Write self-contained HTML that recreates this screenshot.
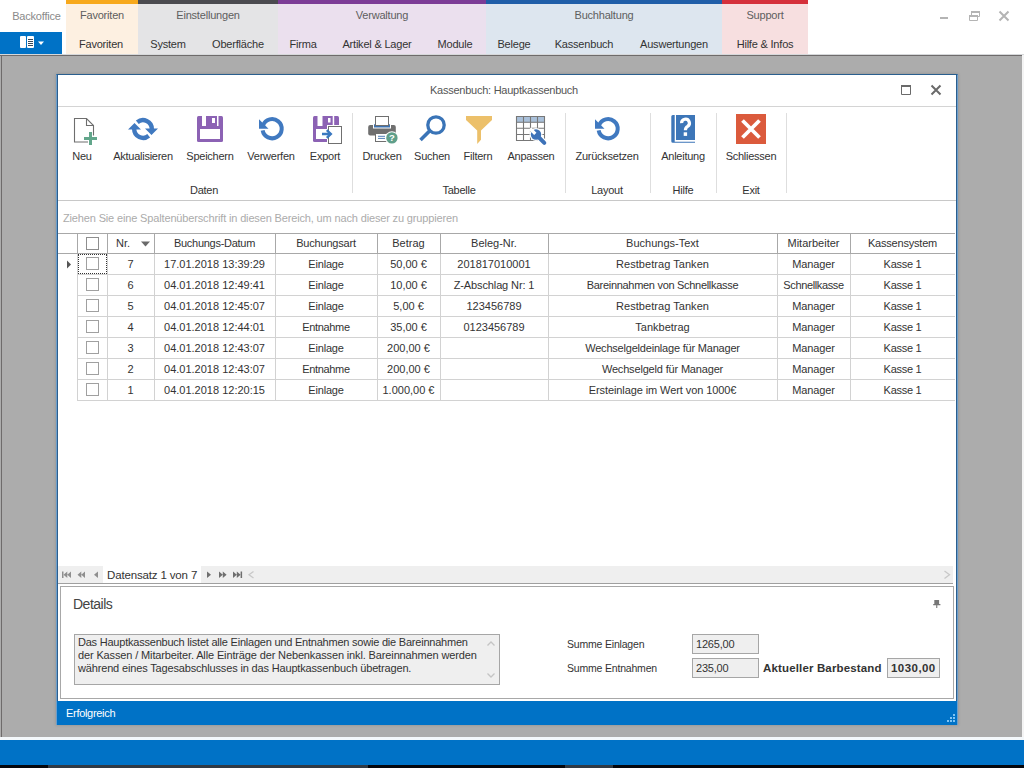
<!DOCTYPE html>
<html><head><meta charset="utf-8">
<style>
*{box-sizing:border-box;margin:0;padding:0}
html,body{width:1024px;height:768px;overflow:hidden;background:#acacac;font-family:"Liberation Sans",sans-serif;color:#333}
.a{position:absolute}
.t{position:absolute;white-space:nowrap;line-height:12px;font-size:11px}
.c{text-align:center}
</style></head><body>
<!-- top app ribbon -->
<div class="a" style="left:0;top:0;width:1024px;height:54px;background:#fff"></div>
<div class="a" style="left:0;top:54px;width:1024px;height:1px;background:#d6d8da"></div>
<div class="a" style="left:0;top:55px;width:1024px;height:1px;background:#6e6b6b"></div>
<div class="a" style="left:1px;top:55px;width:1px;height:682px;background:#6e6b6b"></div>
<div class="a" style="left:1022px;top:55px;width:2px;height:682px;background:#f4f4f4"></div>
<div class="t" style="left:0;top:10px;width:73px;text-align:center;color:#8a8a8a;letter-spacing:-0.2px">Backoffice</div>
<div class="a" style="left:0;top:32px;width:62px;height:22px;background:#0072c6"></div>

<!-- tab groups -->
<div class="a" style="left:66px;top:0;width:72px;height:54px;background:#fdf0e1"></div>
<div class="a" style="left:66px;top:0;width:72px;height:4px;background:#f7a81b"></div>
<div class="a" style="left:138px;top:0;width:140px;height:54px;background:#e4e4e6"></div>
<div class="a" style="left:138px;top:0;width:140px;height:4px;background:#4b4b50"></div>
<div class="a" style="left:278px;top:0;width:208px;height:54px;background:#ebe0ee"></div>
<div class="a" style="left:278px;top:0;width:208px;height:4px;background:#7c3c96"></div>
<div class="a" style="left:486px;top:0;width:236px;height:54px;background:#dde6ef"></div>
<div class="a" style="left:486px;top:0;width:236px;height:4px;background:#1f5ea8"></div>
<div class="a" style="left:722px;top:0;width:86px;height:54px;background:#f7dfe0"></div>
<div class="a" style="left:722px;top:0;width:86px;height:4px;background:#d5303b"></div>


<!-- tab labels -->
<div class="t c" style="left:66px;top:9px;width:72px;color:#5e5e5e;letter-spacing:-0.2px">Favoriten</div>
<div class="t c" style="left:138px;top:9px;width:140px;color:#5e5e5e;letter-spacing:-0.2px">Einstellungen</div>
<div class="t c" style="left:278px;top:9px;width:208px;color:#5e5e5e;letter-spacing:-0.2px">Verwaltung</div>
<div class="t c" style="left:486px;top:9px;width:236px;color:#5e5e5e;letter-spacing:-0.2px">Buchhaltung</div>
<div class="t c" style="left:722px;top:9px;width:86px;color:#5e5e5e;letter-spacing:-0.2px">Support</div>
<div class="t c" style="left:61px;top:38px;width:80px;color:#333;letter-spacing:-0.2px">Favoriten</div>
<div class="t c" style="left:128px;top:38px;width:80px;color:#333;letter-spacing:-0.2px">System</div>
<div class="t c" style="left:198px;top:38px;width:80px;color:#333;letter-spacing:-0.2px">Oberfläche</div>
<div class="t c" style="left:263px;top:38px;width:80px;color:#333;letter-spacing:-0.2px">Firma</div>
<div class="t c" style="left:327px;top:38px;width:100px;color:#333;letter-spacing:-0.2px">Artikel &amp; Lager</div>
<div class="t c" style="left:415px;top:38px;width:80px;color:#333;letter-spacing:-0.2px">Module</div>
<div class="t c" style="left:474px;top:38px;width:80px;color:#333;letter-spacing:-0.2px">Belege</div>
<div class="t c" style="left:534px;top:38px;width:100px;color:#333;letter-spacing:-0.2px">Kassenbuch</div>
<div class="t c" style="left:624px;top:38px;width:100px;color:#333;letter-spacing:-0.2px">Auswertungen</div>
<div class="t c" style="left:715px;top:38px;width:100px;color:#333;letter-spacing:-0.2px">Hilfe &amp; Infos</div>
<!-- app icon -->
<div class="a" style="left:20px;top:36px;width:6px;height:12px;background:#fff;border-radius:1px"></div>
<div class="a" style="left:27px;top:36px;width:7px;height:12px;background:#fff;border-radius:1px"></div>
<div class="a" style="left:28px;top:39px;width:5px;height:1px;background:#3a4a5a"></div>
<div class="a" style="left:28px;top:41px;width:5px;height:1px;background:#3a4a5a"></div>
<div class="a" style="left:28px;top:43px;width:5px;height:1px;background:#3a4a5a"></div>
<div class="a" style="left:28px;top:45px;width:5px;height:1px;background:#3a4a5a"></div>
<svg class="a" style="left:37px;top:40px" width="8" height="6"><path d="M1 1.5h6l-3 3.5z" fill="#fff"/></svg>
<!-- window controls -->
<svg class="a" style="left:930px;top:0" width="94" height="32">
<rect x="10" y="17" width="8" height="2" fill="#b4b4b4"/>
<path d="M39.5 15.5h8v5h-8z M41.5 15.5v-4h8v5h-2" fill="none" stroke="#b4b4b4" stroke-width="1"/><rect x="39" y="15" width="9" height="2" fill="#b4b4b4"/><rect x="41" y="11" width="9" height="2" fill="#b4b4b4"/>
<path d="M69.5 11.5l9 9 M78.5 11.5l-9 9" stroke="#b4b4b4" stroke-width="2"/>
</svg>

<!-- bottom taskbar -->
<div class="a" style="left:0;top:737px;width:1024px;height:3px;background:#f4f8fb"></div>
<div class="a" style="left:0;top:740px;width:1024px;height:25px;background:#0072c6"></div>
<div class="a" style="left:0;top:765px;width:1024px;height:3px;background:#05070c"></div>
<div class="a" style="left:48px;top:765px;width:320px;height:3px;background:#303a44"></div>
<div class="a" style="left:565px;top:765px;width:48px;height:3px;background:#303a44"></div>

<!-- window -->
<div class="a" id="win" style="left:56px;top:74px;width:902px;height:651px;background:#fff;border-top:1px solid #2a5f8e;border-left:1px solid #6c9ecb;border-right:1px solid #6c9ecb;box-shadow:0 0 3px rgba(0,0,0,0.18)"></div>
<div class="a" style="left:57px;top:75px;width:1px;height:650px;background:#2b5e8e"></div>
<div class="a" style="left:956px;top:75px;width:1px;height:650px;background:#2b5e8e"></div>
<div class="t" style="left:55px;top:84px;width:898px;text-align:center;color:#555;letter-spacing:-0.25px">Kassenbuch: Hauptkassenbuch</div>
<div class="a" style="left:58px;top:106px;width:898px;height:1px;background:#d4d4d4"></div>
<div class="a" style="left:58px;top:200px;width:898px;height:1px;background:#c8c8c8"></div>


<!-- toolbar labels -->
<div class="t c" style="left:52px;top:150px;width:60px;color:#333;letter-spacing:-0.25px">Neu</div>
<div class="t c" style="left:103px;top:150px;width:80px;color:#333;letter-spacing:-0.25px">Aktualisieren</div>
<div class="t c" style="left:170px;top:150px;width:80px;color:#333;letter-spacing:-0.25px">Speichern</div>
<div class="t c" style="left:231px;top:150px;width:80px;color:#333;letter-spacing:-0.25px">Verwerfen</div>
<div class="t c" style="left:295px;top:150px;width:60px;color:#333;letter-spacing:-0.25px">Export</div>
<div class="t c" style="left:352px;top:150px;width:60px;color:#333;letter-spacing:-0.25px">Drucken</div>
<div class="t c" style="left:402px;top:150px;width:60px;color:#333;letter-spacing:-0.25px">Suchen</div>
<div class="t c" style="left:448px;top:150px;width:60px;color:#333;letter-spacing:-0.25px">Filtern</div>
<div class="t c" style="left:501px;top:150px;width:60px;color:#333;letter-spacing:-0.25px">Anpassen</div>
<div class="t c" style="left:567px;top:150px;width:80px;color:#333;letter-spacing:-0.25px">Zurücksetzen</div>
<div class="t c" style="left:643px;top:150px;width:80px;color:#333;letter-spacing:-0.25px">Anleitung</div>
<div class="t c" style="left:711px;top:150px;width:80px;color:#333;letter-spacing:-0.25px">Schliessen</div>
<div class="t c" style="left:174px;top:184px;width:60px;color:#333;letter-spacing:-0.25px">Daten</div>
<div class="t c" style="left:429px;top:184px;width:60px;color:#333;letter-spacing:-0.25px">Tabelle</div>
<div class="t c" style="left:577px;top:184px;width:60px;color:#333;letter-spacing:-0.25px">Layout</div>
<div class="t c" style="left:653px;top:184px;width:60px;color:#333;letter-spacing:-0.25px">Hilfe</div>
<div class="t c" style="left:721px;top:184px;width:60px;color:#333;letter-spacing:-0.25px">Exit</div>
<!-- separators -->
<div class="a" style="left:352px;top:113px;width:1px;height:80px;background:#dedede"></div>
<div class="a" style="left:565px;top:113px;width:1px;height:80px;background:#dedede"></div>
<div class="a" style="left:650px;top:113px;width:1px;height:80px;background:#dedede"></div>
<div class="a" style="left:716px;top:113px;width:1px;height:80px;background:#dedede"></div>
<div class="a" style="left:786px;top:113px;width:1px;height:80px;background:#dedede"></div>
<!-- icons -->
<svg class="a" style="left:70px;top:112px" width="32" height="36">
<path d="M4.5 6.5h12l7 7v10 M4.5 6v24h13.5 M16.5 6.5v7h7" stroke="#6e6e6e" stroke-width="1.1" fill="none"/>
<rect x="19" y="20" width="3" height="13" fill="#62a68b"/><rect x="14" y="25" width="13" height="3" fill="#62a68b"/>
</svg>
<svg class="a" style="left:124px;top:112px" width="40" height="34">
<g fill="none" stroke="#4079c0" stroke-width="4.4">
<path d="M13.3 10.3A8.8 8.8 0 0 1 27.8 17"/><path d="M24.7 23.7A8.8 8.8 0 0 1 10.2 17"/></g>
<path d="M21 16.4H34L27.5 23Z M4 17.6H17L10.5 11Z" fill="#4079c0"/>
</svg>
<svg class="a" style="left:192px;top:110px" width="36" height="36">
<rect x="5" y="6" width="26" height="26" rx="1.5" fill="#8c62b4"/>
<rect x="10" y="5" width="4" height="11" fill="#fff"/><rect x="25" y="5" width="1.5" height="11" fill="#fff"/>
<rect x="20" y="8" width="3" height="5" fill="#fff"/><rect x="8" y="19" width="20" height="10" fill="#fff"/>
</svg>
<svg class="a" style="left:254px;top:112px" width="36" height="34">
<path d="M8.65 18.4A9.6 9.6 0 1 0 9.08 13.42" fill="none" stroke="#4079c0" stroke-width="4"/>
<path d="M5 7.3V16.8H14.5Z" fill="#4079c0"/>
</svg>
<svg class="a" style="left:308px;top:110px" width="38" height="38">
<rect x="5" y="6" width="26" height="26" rx="1.5" fill="#8c62b4"/>
<rect x="9.5" y="5" width="5" height="11" fill="#fff"/><rect x="24.7" y="5" width="1.5" height="10" fill="#fff"/>
<rect x="20" y="8" width="2.5" height="4.5" fill="#fff"/><rect x="8" y="19" width="12" height="10" fill="#fff"/>
<rect x="19" y="15" width="17" height="20" fill="#fff"/>
<rect x="20.5" y="16.5" width="13" height="17" fill="#fff" stroke="#707070" stroke-width="1"/>
<path d="M14 24h9 M18.8 20.2L22.8 24L18.8 27.8" fill="none" stroke="#3a78c0" stroke-width="2.4"/>
</svg>
<svg class="a" style="left:363px;top:110px" width="40" height="40">
<rect x="5.2" y="15" width="27.6" height="10.5" rx="2" fill="#6f6f6f"/>
<rect x="10" y="14" width="18" height="4.5" fill="#fff"/>
<rect x="11" y="14.3" width="16" height="3.2" fill="#3d72b0"/>
<rect x="12.5" y="6.5" width="13" height="9" fill="#fff" stroke="#6f6f6f" stroke-width="1"/>
<rect x="12.5" y="23.5" width="16" height="8" fill="#fff" stroke="#6f6f6f" stroke-width="1"/>
<path d="M15 26.3h7 M15 28.4h7" stroke="#3d72b0" stroke-width="0.9"/>
<circle cx="28.9" cy="27.9" r="6.7" fill="#fff"/><circle cx="28.9" cy="27.9" r="5.7" fill="#5f9f8a"/>
<text x="28.9" y="31.4" font-family="Liberation Sans" font-weight="bold" font-size="9.5" fill="#fff" text-anchor="middle">?</text>
</svg>
<svg class="a" style="left:412px;top:110px" width="40" height="40">
<circle cx="24" cy="15" r="8.2" fill="none" stroke="#3a74b7" stroke-width="3.3"/>
<path d="M8.5 30L17.8 20.7" stroke="#3a74b7" stroke-width="3.6"/>
</svg>
<svg class="a" style="left:459px;top:110px" width="40" height="40">
<path d="M7 6H33V10L22 20.5V29.7L18.2 33.9V20.5L7 10Z" fill="#ecc06a"/>
</svg>
<svg class="a" style="left:511px;top:110px" width="40" height="40">
<rect x="5.5" y="6.5" width="28" height="6" fill="#a9c0da"/>
<path d="M5.5 6.5h28v24h-28z M5.5 12.3h28 M5.5 18.3h28 M5.5 24.5h28 M12.5 6.5v24 M19.5 6.5v24 M26.5 6.5v24" fill="none" stroke="#777" stroke-width="1.1"/>
<circle cx="25" cy="24.5" r="6.4" fill="#fff"/>
<path d="M26 25.5L33.3 32.8" stroke="#fff" stroke-width="6.2" stroke-linecap="round"/>
<circle cx="25" cy="24.5" r="5.2" fill="#3d72b8"/>
<path d="M26 25.5L33.3 32.8" stroke="#3d72b8" stroke-width="4" stroke-linecap="round"/>
<path d="M25.43 22.67L20.13 17.37L17.87 19.63L23.17 24.93Z" fill="#fff"/>
</svg>
<svg class="a" style="left:664px;top:110px" width="40" height="40">
<path d="M7.3 6.5Q7.3 5 8.8 5H10.7V31.8H31V32.8H8.8Q7.3 32.8 7.3 31.3Z" fill="#3d76b8"/>
<rect x="12" y="5" width="19" height="25" fill="#3d76b8"/>
<path d="M17.6 13.2A3.9 3.9 0 1 1 23.6 16.3Q21.4 17.6 21.4 20.3" fill="none" stroke="#fff" stroke-width="3.2"/>
<rect x="19.7" y="22.3" width="3.4" height="3.6" fill="#fff"/>
</svg>
<svg class="a" style="left:731px;top:108px" width="40" height="40">
<rect x="5" y="6" width="30" height="30" fill="#db5a3c"/>
<path d="M11.5 12.5L28.5 29.5 M28.5 12.5L11.5 29.5" stroke="#fff" stroke-width="3.8"/>
</svg>


<svg class="a" style="left:590px;top:112px" width="36" height="34">
<path d="M8.65 18.4A9.6 9.6 0 1 0 9.08 13.42" fill="none" stroke="#4079c0" stroke-width="4"/>
<path d="M5 7.3V16.8H14.5Z" fill="#4079c0"/>
</svg>
<!-- title controls -->
<svg class="a" style="left:895px;top:80px" width="55" height="20">
<path d="M6.5 5.5h9v9h-9z" fill="none" stroke="#6a6a6a" stroke-width="1"/><rect x="6" y="5" width="10" height="2" fill="#6a6a6a"/>
<path d="M36.5 5.5l9 9 M45.5 5.5l-9 9" stroke="#6a6a6a" stroke-width="2"/>
</svg>
<!-- grid -->
<div class="t" style="left:63px;top:212px;color:#ababab;letter-spacing:-0.15px">Ziehen Sie eine Spaltenüberschrift in diesen Bereich, um nach dieser zu gruppieren</div>
<div class="a" style="left:58px;top:233px;width:897px;height:1px;background:#a8a8a8"></div>
<div class="a" style="left:58px;top:253px;width:897px;height:1px;background:#a8a8a8"></div>
<div class="a" style="left:77px;top:234px;width:1px;height:19px;background:#a8a8a8"></div>
<div class="a" style="left:107px;top:234px;width:1px;height:19px;background:#a8a8a8"></div>
<div class="a" style="left:154px;top:234px;width:1px;height:19px;background:#a8a8a8"></div>
<div class="a" style="left:275px;top:234px;width:1px;height:19px;background:#a8a8a8"></div>
<div class="a" style="left:377px;top:234px;width:1px;height:19px;background:#a8a8a8"></div>
<div class="a" style="left:440px;top:234px;width:1px;height:19px;background:#a8a8a8"></div>
<div class="a" style="left:548px;top:234px;width:1px;height:19px;background:#a8a8a8"></div>
<div class="a" style="left:777px;top:234px;width:1px;height:19px;background:#a8a8a8"></div>
<div class="a" style="left:850px;top:234px;width:1px;height:19px;background:#a8a8a8"></div>
<div class="a" style="left:77px;top:254px;width:1px;height:146px;background:#d2d2d2"></div>
<div class="a" style="left:107px;top:254px;width:1px;height:146px;background:#d2d2d2"></div>
<div class="a" style="left:154px;top:254px;width:1px;height:146px;background:#d2d2d2"></div>
<div class="a" style="left:275px;top:254px;width:1px;height:146px;background:#d2d2d2"></div>
<div class="a" style="left:377px;top:254px;width:1px;height:146px;background:#d2d2d2"></div>
<div class="a" style="left:440px;top:254px;width:1px;height:146px;background:#d2d2d2"></div>
<div class="a" style="left:548px;top:254px;width:1px;height:146px;background:#d2d2d2"></div>
<div class="a" style="left:777px;top:254px;width:1px;height:146px;background:#d2d2d2"></div>
<div class="a" style="left:850px;top:254px;width:1px;height:146px;background:#d2d2d2"></div>
<div class="a" style="left:77px;top:274px;width:878px;height:1px;background:#d2d2d2"></div>
<div class="a" style="left:77px;top:295px;width:878px;height:1px;background:#d2d2d2"></div>
<div class="a" style="left:77px;top:316px;width:878px;height:1px;background:#d2d2d2"></div>
<div class="a" style="left:77px;top:337px;width:878px;height:1px;background:#d2d2d2"></div>
<div class="a" style="left:77px;top:358px;width:878px;height:1px;background:#d2d2d2"></div>
<div class="a" style="left:77px;top:379px;width:878px;height:1px;background:#d2d2d2"></div>
<div class="a" style="left:77px;top:400px;width:878px;height:1px;background:#d2d2d2"></div>
<div class="t" style="left:116px;top:237px;color:#333">Nr.</div>
<svg class="a" style="left:141px;top:241px" width="10" height="6"><path d="M0 0.5H9L4.5 5.5Z" fill="#6a6a6a"/></svg>
<div class="t c" style="left:154px;top:237px;width:121px;color:#333;letter-spacing:-0.28px">Buchungs-Datum</div>
<div class="t c" style="left:275px;top:237px;width:102px;color:#333;letter-spacing:-0.2px">Buchungsart</div>
<div class="t c" style="left:377px;top:237px;width:63px;color:#333">Betrag</div>
<div class="t c" style="left:440px;top:237px;width:108px;color:#333">Beleg-Nr.</div>
<div class="t c" style="left:548px;top:237px;width:229px;color:#333">Buchungs-Text</div>
<div class="t c" style="left:777px;top:237px;width:73px;color:#333">Mitarbeiter</div>
<div class="t c" style="left:850px;top:237px;width:105px;color:#333;letter-spacing:-0.2px">Kassensystem</div>
<div class="a" style="left:86px;top:237px;width:13px;height:13px;border:1px solid #8e8e8e;background:#fff"></div>
<div class="a" style="left:86px;top:257px;width:13px;height:13px;border:1px solid #a0a0a0;background:#fff"></div>
<div class="t c" style="left:107px;top:258px;width:47px;color:#333">7</div>
<div class="t c" style="left:154px;top:258px;width:121px;color:#333">17.01.2018 13:39:29</div>
<div class="t c" style="left:275px;top:258px;width:102px;color:#333;letter-spacing:-0.2px">Einlage</div>
<div class="t c" style="left:377px;top:258px;width:63px;color:#333">50,00 €</div>
<div class="t c" style="left:440px;top:258px;width:108px;color:#333">201817010001</div>
<div class="t c" style="left:548px;top:258px;width:229px;color:#333;letter-spacing:0.05px">Restbetrag Tanken</div>
<div class="t c" style="left:777px;top:258px;width:73px;color:#333;letter-spacing:-0.14px">Manager</div>
<div class="t c" style="left:850px;top:258px;width:105px;color:#333;letter-spacing:-0.28px">Kasse 1</div>
<div class="a" style="left:86px;top:278px;width:13px;height:13px;border:1px solid #a0a0a0;background:#fff"></div>
<div class="t c" style="left:107px;top:279px;width:47px;color:#333">6</div>
<div class="t c" style="left:154px;top:279px;width:121px;color:#333">04.01.2018 12:49:41</div>
<div class="t c" style="left:275px;top:279px;width:102px;color:#333;letter-spacing:-0.2px">Einlage</div>
<div class="t c" style="left:377px;top:279px;width:63px;color:#333">10,00 €</div>
<div class="t c" style="left:440px;top:279px;width:108px;color:#333;letter-spacing:-0.12px">Z-Abschlag Nr: 1</div>
<div class="t c" style="left:548px;top:279px;width:229px;color:#333;letter-spacing:-0.3px">Bareinnahmen von Schnellkasse</div>
<div class="t c" style="left:777px;top:279px;width:73px;color:#333;letter-spacing:-0.37px">Schnellkasse</div>
<div class="t c" style="left:850px;top:279px;width:105px;color:#333;letter-spacing:-0.28px">Kasse 1</div>
<div class="a" style="left:86px;top:299px;width:13px;height:13px;border:1px solid #a0a0a0;background:#fff"></div>
<div class="t c" style="left:107px;top:300px;width:47px;color:#333">5</div>
<div class="t c" style="left:154px;top:300px;width:121px;color:#333">04.01.2018 12:45:07</div>
<div class="t c" style="left:275px;top:300px;width:102px;color:#333;letter-spacing:-0.2px">Einlage</div>
<div class="t c" style="left:377px;top:300px;width:63px;color:#333">5,00 €</div>
<div class="t c" style="left:440px;top:300px;width:108px;color:#333">123456789</div>
<div class="t c" style="left:548px;top:300px;width:229px;color:#333;letter-spacing:0.05px">Restbetrag Tanken</div>
<div class="t c" style="left:777px;top:300px;width:73px;color:#333;letter-spacing:-0.14px">Manager</div>
<div class="t c" style="left:850px;top:300px;width:105px;color:#333;letter-spacing:-0.28px">Kasse 1</div>
<div class="a" style="left:86px;top:320px;width:13px;height:13px;border:1px solid #a0a0a0;background:#fff"></div>
<div class="t c" style="left:107px;top:321px;width:47px;color:#333">4</div>
<div class="t c" style="left:154px;top:321px;width:121px;color:#333">04.01.2018 12:44:01</div>
<div class="t c" style="left:275px;top:321px;width:102px;color:#333;letter-spacing:-0.34px">Entnahme</div>
<div class="t c" style="left:377px;top:321px;width:63px;color:#333">35,00 €</div>
<div class="t c" style="left:440px;top:321px;width:108px;color:#333">0123456789</div>
<div class="t c" style="left:548px;top:321px;width:229px;color:#333">Tankbetrag</div>
<div class="t c" style="left:777px;top:321px;width:73px;color:#333;letter-spacing:-0.14px">Manager</div>
<div class="t c" style="left:850px;top:321px;width:105px;color:#333;letter-spacing:-0.28px">Kasse 1</div>
<div class="a" style="left:86px;top:341px;width:13px;height:13px;border:1px solid #a0a0a0;background:#fff"></div>
<div class="t c" style="left:107px;top:342px;width:47px;color:#333">3</div>
<div class="t c" style="left:154px;top:342px;width:121px;color:#333">04.01.2018 12:43:07</div>
<div class="t c" style="left:275px;top:342px;width:102px;color:#333;letter-spacing:-0.2px">Einlage</div>
<div class="t c" style="left:377px;top:342px;width:63px;color:#333">200,00 €</div>
<div class="t c" style="left:548px;top:342px;width:229px;color:#333;letter-spacing:-0.2px">Wechselgeldeinlage für Manager</div>
<div class="t c" style="left:777px;top:342px;width:73px;color:#333;letter-spacing:-0.14px">Manager</div>
<div class="t c" style="left:850px;top:342px;width:105px;color:#333;letter-spacing:-0.28px">Kasse 1</div>
<div class="a" style="left:86px;top:362px;width:13px;height:13px;border:1px solid #a0a0a0;background:#fff"></div>
<div class="t c" style="left:107px;top:363px;width:47px;color:#333">2</div>
<div class="t c" style="left:154px;top:363px;width:121px;color:#333">04.01.2018 12:43:07</div>
<div class="t c" style="left:275px;top:363px;width:102px;color:#333;letter-spacing:-0.34px">Entnahme</div>
<div class="t c" style="left:377px;top:363px;width:63px;color:#333">200,00 €</div>
<div class="t c" style="left:548px;top:363px;width:229px;color:#333;letter-spacing:-0.17px">Wechselgeld für Manager</div>
<div class="t c" style="left:777px;top:363px;width:73px;color:#333;letter-spacing:-0.14px">Manager</div>
<div class="t c" style="left:850px;top:363px;width:105px;color:#333;letter-spacing:-0.28px">Kasse 1</div>
<div class="a" style="left:86px;top:383px;width:13px;height:13px;border:1px solid #a0a0a0;background:#fff"></div>
<div class="t c" style="left:107px;top:384px;width:47px;color:#333">1</div>
<div class="t c" style="left:154px;top:384px;width:121px;color:#333">04.01.2018 12:20:15</div>
<div class="t c" style="left:275px;top:384px;width:102px;color:#333;letter-spacing:-0.2px">Einlage</div>
<div class="t c" style="left:377px;top:384px;width:63px;color:#333">1.000,00 €</div>
<div class="t c" style="left:548px;top:384px;width:229px;color:#333;letter-spacing:-0.09px">Ersteinlage im Wert von 1000€</div>
<div class="t c" style="left:777px;top:384px;width:73px;color:#333;letter-spacing:-0.14px">Manager</div>
<div class="t c" style="left:850px;top:384px;width:105px;color:#333;letter-spacing:-0.28px">Kasse 1</div>
<svg class="a" style="left:66px;top:260px" width="6" height="9"><path d="M1 0.5V8.5L5 4.5Z" fill="#555"/></svg>
<div class="a" style="left:78px;top:254px;width:29px;height:20px;border:1px dotted #333"></div>
<!-- navigator -->
<div class="a" style="left:58px;top:566px;width:895px;height:17px;background:#efefef"></div>
<div class="a" style="left:103px;top:566px;width:98px;height:17px;background:#fff"></div>
<div class="a" style="left:58px;top:583px;width:895px;height:1px;background:#a0a0a0"></div>
<svg class="a" style="left:58px;top:566px" width="200" height="17">
<g fill="#8f8f8f"><rect x="4" y="5.5" width="1.5" height="6.5"/><path d="M5.5 8.75L9.3 5.5V12Z M9.3 8.75L13 5.5V12Z"/>
<path d="M19.5 8.75L23.3 5.5V12Z M23.3 8.75L27 5.5V12Z"/><path d="M36 8.75L40 5.5V12Z"/></g>
<g fill="#6f6f6f"><path d="M149 5.5L153 8.75L149 12Z"/><path d="M161 5.5L164.8 8.75L161 12Z M164.8 5.5L168.6 8.75L164.8 12Z"/>
<path d="M175 5.5L178.8 8.75L175 12Z M178.8 5.5L182.6 8.75L178.8 12Z"/><rect x="182.6" y="5.5" width="1.5" height="6.5"/></g>
<path d="M195.5 5.5L191 8.75L195.5 12" fill="none" stroke="#c8c8c8" stroke-width="1.3"/>
</svg>
<div class="t" style="left:107px;top:569px;font-size:11.5px;color:#333;letter-spacing:-0.15px">Datensatz 1 von 7</div>
<svg class="a" style="left:940px;top:566px" width="14" height="17"><path d="M4.5 5L9.5 8.75L4.5 12.5" fill="none" stroke="#c8c8c8" stroke-width="1.3"/></svg>
<!-- details panel -->
<div class="a" style="left:60px;top:586px;width:894px;height:113px;border:1px solid #a8a8a8;background:#fff"></div>
<div class="t" style="left:73px;top:596px;font-size:14px;line-height:16px;color:#444;letter-spacing:-0.5px">Details</div>
<svg class="a" style="left:930px;top:597px" width="14" height="14">
<path d="M4.3 3h4.8v4.3h-4.8z" fill="#777"/><path d="M3.2 7h7.2v1.3h-7.2z M6.2 8.3v2.6h1.1v-2.6z" fill="#777"/>
</svg>
<div class="a" style="left:74px;top:634px;width:426px;height:51px;border:1px solid #a6a6a6;background:#efefef"></div>
<div class="t" style="left:78px;top:636px;font-size:11px;line-height:13px;color:#333;letter-spacing:-0.22px">Das Hauptkassenbuch listet alle Einlagen und Entnahmen sowie die Bareinnahmen</div>
<div class="t" style="left:78px;top:649px;font-size:11px;line-height:13px;color:#333;letter-spacing:-0.135px">der Kassen / Mitarbeiter. Alle Einträge der Nebenkassen inkl. Bareinnahmen werden</div>
<div class="t" style="left:78px;top:662px;font-size:11px;line-height:13px;color:#333;letter-spacing:-0.16px">während eines Tagesabschlusses in das Hauptkassenbuch übetragen.</div>
<svg class="a" style="left:484px;top:638px" width="14" height="44">
<path d="M3.5 7.5L7 4L10.5 7.5 M3.5 35.5L7 39L10.5 35.5" fill="none" stroke="#c4c4c4" stroke-width="1.3"/>
</svg>
<div class="t" style="left:567px;top:638px;font-size:10.5px;color:#333;letter-spacing:-0.19px">Summe Einlagen</div>
<div class="t" style="left:567px;top:662px;font-size:10.5px;color:#333;letter-spacing:-0.19px">Summe Entnahmen</div>
<div class="a" style="left:692px;top:634px;width:67px;height:20px;border:1px solid #a6a6a6;background:#efefef"></div>
<div class="a" style="left:692px;top:658px;width:67px;height:20px;border:1px solid #a6a6a6;background:#efefef"></div>
<div class="a" style="left:887px;top:658px;width:53px;height:20px;border:1px solid #a6a6a6;background:#efefef"></div>
<div class="t" style="left:696px;top:638px;font-size:11px;color:#333;letter-spacing:-0.2px">1265,00</div>
<div class="t" style="left:696px;top:662px;font-size:11px;color:#333;letter-spacing:-0.2px">235,00</div>
<div class="t" style="left:763px;top:662px;font-size:11.5px;font-weight:bold;color:#333;letter-spacing:0.15px">Aktueller Barbestand</div>
<div class="t" style="left:891px;top:662px;font-size:11.5px;font-weight:bold;color:#333;letter-spacing:0.45px">1030,00</div>


<!-- status bar -->
<div class="a" style="left:57px;top:701px;width:900px;height:24px;background:#0072c6"></div>
<div class="t" style="left:66px;top:707px;color:#fff;letter-spacing:-0.3px">Erfolgreich</div>
<!-- resize grip -->
<svg class="a" style="left:945px;top:712px" width="12" height="12">
<g fill="#7fc4f4"><rect x="8" y="2" width="2" height="2"/><rect x="5" y="5" width="2" height="2"/><rect x="8" y="5" width="2" height="2"/>
<rect x="2" y="8" width="2" height="2"/><rect x="5" y="8" width="2" height="2"/><rect x="8" y="8" width="2" height="2"/></g>
</svg>
</body></html>
